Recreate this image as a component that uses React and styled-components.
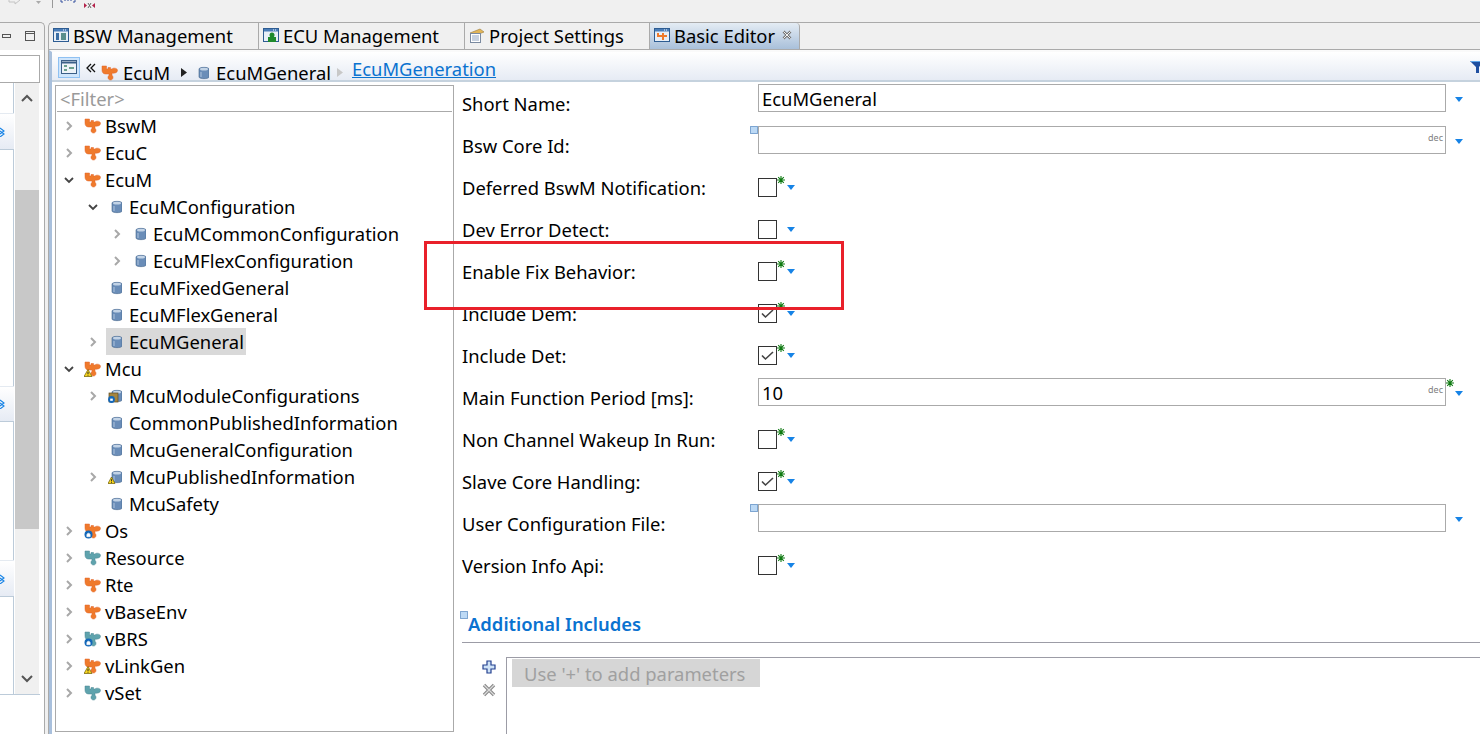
import styled, { createGlobalStyle } from "styled-components";

const Global = createGlobalStyle`
  html, body { margin: 0; padding: 0; background: #f0f0f0; }
  body { font-family: "Noto Sans", "Open Sans", sans-serif; color: #000; }
  #root { width: 1480px; height: 734px; overflow: hidden; }
`;

const Stage = styled.div`
  position: relative;
  width: 1480px;
  height: 734px;
  display: flex;
  flex-direction: column;
  overflow: hidden;
  background: #f0f0f0;
  font-size: 18.4px;
`;

const TopBar = styled.div`
  height: 22px;
  display: flex;
  align-items: flex-start;
  flex: none;
`;

const Main = styled.div`
  flex: 1;
  min-height: 0;
  display: flex;
  gap: 3px;
`;

const SidePanel = styled.div`
  width: 45px;
  flex: none;
  display: flex;
  flex-direction: column;
  border-right: 1px solid #aaa;
  border-top: 1px solid #aaa;
  border-top-right-radius: 5px;
  box-sizing: border-box;
`;

const SideStrip = styled.div`
  height: 26px;
  flex: none;
  display: flex;
  align-items: center;
  gap: 14px;
  padding-left: 2px;
  box-sizing: border-box;
`;

const SideBody = styled.div`
  flex: 1;
  background: #fff;
  padding-top: 5px;
  display: flex;
  flex-direction: column;
  border-top: 1px solid #f0f0f0;
`;

const SideInput = styled.div`
  height: 28px;
  width: 40px;
  flex: none;
  border: 1px solid #aaa;
  border-left: 0;
  box-sizing: border-box;
`;

const SideRow = styled.div`
  height: 611px;
  flex: none;
  display: flex;
  border-bottom: 1px solid #bccbd9;
  width: 40px;
`;

const Sections = styled.div`
  width: 14px;
  flex: none;
  display: flex;
  flex-direction: column;
  border-right: 1px solid #bccbd9;
  box-sizing: border-box;
`;

const SectionHead = styled.div`
  height: ${(p) => p.$h}px;
  flex: none;
  background: linear-gradient(#ffffff, #e6ebf4);
  margin-right: -1px;
  border-top: 1px solid #e4eaf1;
  border-bottom: 1px solid #bccbd9;
  box-sizing: border-box;
  display: flex;
  align-items: center;
  overflow: hidden;
`;

const SectionBody = styled.div`
  height: ${(p) => p.$h}px;
  flex: none;
`;

const Scroll = styled.div`
  width: 24px;
  margin-left: 1px;
  flex: none;
  background: #f0f0f0;
  display: flex;
  flex-direction: column;
  align-items: center;
`;

const ScrollEnd = styled.div`
  height: 30px;
  display: flex;
  align-items: center;
  flex: none;
`;

const Thumb = styled.div`
  width: 24px;
  height: 339px;
  background: #c8c8c8;
  flex: none;
  margin-top: 77px;
  margin-bottom: 135px;
`;

const Editor = styled.div`
  flex: 1;
  min-width: 0;
  display: flex;
  flex-direction: column;
  border-left: 1px solid #aaa;
  border-top: 1px solid #aaa;
  border-top-left-radius: 5px;
  box-sizing: border-box;
`;

const Tabs = styled.div`
  height: 27px;
  flex: none;
  display: flex;
  border-bottom: 1px solid #aaa;
  box-sizing: border-box;
`;

const Tab = styled.div`
  width: ${(p) => p.$w}px;
  flex: none;
  box-sizing: border-box;
  display: flex;
  align-items: center;
  gap: 4px;
  padding: 0 0 2px 4px;
  white-space: nowrap;
  border-right: 1px solid #aaa;
  ${(p) => p.$active && `
    background: linear-gradient(#e4ecf4, #a9c0da);
    border-top-right-radius: 4px;
  `}
`;

const TabClose = styled.span`
  display: flex;
  margin-left: 3px;
`;

const EditorBody = styled.div`
  flex: 1;
  min-height: 0;
  display: flex;
  border-left: 3px solid #a9c0dc;
  border-top: 2px solid #fafafa;
  background: #fff;
`;

const EditorInner = styled.div`
  flex: 1;
  min-width: 0;
  display: flex;
  flex-direction: column;
`;

const FormHead = styled.div`
  height: 30px;
  flex: none;
  box-sizing: border-box;
  background: linear-gradient(#ffffff, #e6ebf4);
  border-bottom: 2px solid #c5d2de;
  display: flex;
  align-items: center;
  padding: 4px 0 0 6px;
  white-space: nowrap;
`;

const ViewBtn = styled.div`
  width: 22px;
  height: 21px;
  box-sizing: border-box;
  border: 1px solid #8fc1f2;
  background: #cfe5fb;
  display: flex;
  align-items: center;
  justify-content: center;
  flex: none;
  margin-right: 6px;
  margin-top: -2px;
`;

const Crumb = styled.span`
  display: inline-flex;
  align-items: center;
  line-height: 22px;
  padding-top: 9px;
  margin-left: ${(p) => p.$ml || 0}px;
`;

const CrumbText = styled.span`
  margin-left: ${(p) => p.$ml}px;
`;

const CrumbLink = styled.a`
  color: #0a72d0;
  text-decoration: underline;
  line-height: 22px;
  margin-left: 9px;
  margin-top: 2px;
`;

const FilterIcon = styled.span`
  margin-left: auto;
  display: flex;
  margin-right: -4px;
  margin-top: -2px;
`;

const Content = styled.div`
  flex: 1;
  min-height: 0;
  display: flex;
  padding-left: 3px;
`;

const TreeBox = styled.div`
  width: 399px;
  height: 647px;
  margin-top: 3px;
  flex: none;
  border: 1px solid #aaa;
  box-sizing: border-box;
  display: flex;
  flex-direction: column;
`;

const FilterBox = styled.div`
  height: 26px;
  flex: none;
  box-sizing: border-box;
  border-bottom: 1px solid #aaa;
  margin: 0 1px;
  padding-left: 3px;
  color: #9a9a9a;
  line-height: 26px;
`;

const TreeList = styled.div`
  display: flex;
  flex-direction: column;
`;

const TreeRow = styled.div`
  height: 27px;
  display: flex;
  align-items: center;
  padding-left: ${(p) => 6 + p.$depth * 24}px;
  white-space: nowrap;
`;

const Caret = styled.span`
  width: 14px;
  flex: none;
  display: flex;
  justify-content: center;
  margin-right: 5px;
`;

const TreeLabel = styled.span`
  display: inline-flex;
  align-items: center;
  height: 27px;
  gap: ${(p) => (p.$top ? 4 : 7)}px;
  padding: 0 2px;
  margin-left: 1px;
  background: ${(p) => (p.$sel ? "#d9d9d9" : "transparent")};
`;

const IconSlot = styled.span`
  width: ${(p) => (p.$top ? 17 : 14)}px;
  height: 18px;
  flex: none;
  display: flex;
  align-items: center;
  justify-content: center;
`;

const Form = styled.div`
  flex: 1;
  min-width: 0;
  padding: 1px 0 0 8px;
  display: flex;
  flex-direction: column;
`;

const FormRow = styled.div`
  height: 42px;
  flex: none;
  display: flex;
  align-items: flex-start;
`;

const FieldLabel = styled.label`
  width: 296px;
  flex: none;
  line-height: 42px;
  white-space: nowrap;
`;

const TextBox = styled.div`
  position: relative;
  width: 688px;
  height: 28px;
  flex: none;
  margin-top: 1px;
  box-sizing: border-box;
  border: 1px solid #aaa;
  padding-left: 3px;
  line-height: 27px;
  display: flex;
  justify-content: space-between;
`;

const DecTag = styled.span`
  font-size: 9px;
  line-height: 11px;
  color: #808080;
  padding: 5px 2px 0 0;
`;

const Marker = styled.span`
  position: absolute;
  left: ${(p) => p.$x}px;
  top: ${(p) => p.$y}px;
  display: flex;
`;

const Check = styled.div`
  width: 19px;
  height: 19px;
  margin-top: 11px;
  flex: none;
  box-sizing: border-box;
  border: 1px solid #333;
  background: #fff;
  display: flex;
  align-items: center;
  justify-content: center;
`;

const Star = styled.span`
  width: 8px;
  height: 8px;
  flex: none;
  display: flex;
  margin-top: ${(p) => (p.$box ? 2 : 9)}px;
  visibility: ${(p) => (p.$on ? "visible" : "hidden")};
`;

const Drop = styled.span`
  display: flex;
  flex: none;
  margin-top: ${(p) => (p.$box ? 14 : 18)}px;
  margin-left: ${(p) => (p.$box ? 1 : 2)}px;
`;

const SectionTitle = styled.div`
  position: relative;
  margin-top: 21px;
  height: 35px;
  flex: none;
  box-sizing: border-box;
  padding-left: 6px;
  color: #0a72d0;
  font-weight: 600;
  line-height: 32px;
  border-bottom: 1px solid #9c9ca6;
  margin-right: -20px;
`;

const ParamArea = styled.div`
  display: flex;
  padding-top: 14px;
`;

const ParamTools = styled.div`
  width: 44px;
  flex: none;
  display: flex;
  flex-direction: column;
  align-items: flex-end;
  gap: 9px;
  padding: 3px 10px 0 0;
  box-sizing: border-box;
`;

const ParamBox = styled.div`
  width: 980px;
  height: 90px;
  flex: none;
  box-sizing: border-box;
  border: 1px solid #9c9ca6;
  border-right: 0;
  border-bottom: 0;
  padding: 1px 0 0 5px;
`;

const Hint = styled.span`
  display: block;
  width: 248px;
  height: 28px;
  background: #d6d6d6;
  color: #a0a0a0;
  line-height: 30px;
  padding-left: 12px;
  box-sizing: border-box;
  white-space: nowrap;
`;

const RedBox = styled.div`
  position: absolute;
  left: 424px;
  top: 241px;
  width: 420px;
  height: 69px;
  box-sizing: border-box;
  border: 3px solid #e9202a;
  pointer-events: none;
`;

const Puzzle = ({ color = "#ef7a2c", dark = "#e0642a", badge }) => (
  <svg width="17" height="16" viewBox="0 0 17 16">
    <path
      d="M1 1h4.500v3H7V2.500h2.500V4H11c.8-1.300 5.500-1.300 5.500 1.500S12 8.500 11 8v2.500c1.500.5 1.500 4.500-1.500 4.500S6.500 11 8 10.500V9H4.500C2 9 1 7 1 5z"
      fill={color}
      stroke={dark}
      strokeWidth=".5"
    />
    {badge === "warn" && <path d="M4 8.500 8 15.500H0z" fill="#f7d51d" stroke="#6b5a00" strokeWidth=".7" />}
    {badge === "warn" && <path d="M4 10.800v2.300M4 13.800v.8" stroke="#222" strokeWidth="1" />}
    {badge === "info" && <circle cx="4.500" cy="11.500" r="4" fill="#1367b8" />}
    {badge === "info" && <path d="M3.200 11.500a1.300 1.300 0 0 1 2.600 0M2.800 11.500h3.400v2.200H2.800z" fill="#fff" stroke="#fff" strokeWidth=".5" />}
  </svg>
);

const Cylinder = ({ badge }) => (
  <svg width="14" height="16" viewBox="0 0 14 16">
    <path d="M4 4C4 1.800 14 1.800 14 4v8c0 2.200-10 2.200-10 0z" fill="#6a8db8" stroke="#45648c" strokeWidth=".6" />
    <ellipse cx="9" cy="4.200" rx="4" ry="1.400" fill="#c2d3e6" />
    <path d="M6 7v5" stroke="#a5bdd8" strokeWidth="1.200" />
    {badge === "stack" && <rect x="1" y="5" width="9" height="9" fill="#a5853f" stroke="#5f4a20" strokeWidth=".7" />}
    {badge === "stack" && <circle cx="3.500" cy="11.500" r="3.400" fill="#1367b8" />}
    {badge === "stack" && <rect x="2.200" y="10.600" width="2.600" height="2.200" fill="#fff" />}
    {badge === "warn" && <path d="M3.500 8 7 14.500H0z" fill="#f7d51d" stroke="#6b5a00" strokeWidth=".7" />}
    {badge === "warn" && <path d="M3.500 10.200v2.200M3.500 13v.8" stroke="#222" strokeWidth=".9" />}
  </svg>
);

const CaretIcon = ({ open }) =>
  open ? (
    <svg width="12" height="12" viewBox="0 0 12 12">
      <path d="M2 4l4 4 4-4" fill="none" stroke="#444" strokeWidth="1.800" />
    </svg>
  ) : (
    <svg width="12" height="12" viewBox="0 0 12 12">
      <path d="M4 2l4 4-4 4" fill="none" stroke="#a8a8a8" strokeWidth="2" />
    </svg>
  );

const WindowIcon = ({ children }) => (
  <svg width="16" height="16" viewBox="0 0 16 16">
    <rect x=".5" y="1.500" width="15" height="13" fill="#e8eff7" stroke="#2d5c92" />
    <rect x="1" y="2" width="14" height="2.500" fill="#4a7db8" />
    <path d="M10 3h1M12 3h1" stroke="#fff" />
    {children}
  </svg>
);

const DropIcon = () => (
  <svg width="8" height="5" viewBox="0 0 8 5">
    <path d="M0 0h8L4 5z" fill="#1683e6" />
  </svg>
);

const StarIcon = () => (
  <svg width="8" height="8" viewBox="0 0 8 8">
    <path d="M4 0v8M0 4h8M1.200 1.200l5.600 5.600M6.800 1.200 1.200 6.800" stroke="#0f7a12" strokeWidth="1.100" />
  </svg>
);

const DotMark = () => (
  <svg width="8" height="8" viewBox="0 0 8 8">
    <rect x=".5" y=".5" width="7" height="7" fill="#bcd9f5" stroke="#1d5ea8" strokeDasharray="1 1" />
  </svg>
);

const CheckMark = () => (
  <svg width="17" height="17" viewBox="0 0 17 17">
    <path d="M3 8.500l3.500 3.500L14 5" fill="none" stroke="#444" strokeWidth="1.600" />
  </svg>
);

const Triangle = ({ color }) => (
  <svg width="6" height="9" viewBox="0 0 6 9">
    <path d="M0 0l6 4.500L0 9z" fill={color} />
  </svg>
);

const Chevrons = () => (
  <svg width="10" height="10" viewBox="0 0 10 10">
    <path d="M5 1 1 5l4 4M9 1 5 5l4 4" fill="none" stroke="#111" strokeWidth="1.300" />
  </svg>
);

const SectionChevron = () => (
  <svg width="13" height="10" viewBox="0 0 13 10">
    <path d="M0 1l4 3-4 3M0 4l4 3-4 3" fill="none" stroke="#1683e6" strokeWidth="1.100" />
  </svg>
);

const ScrollArrow = ({ up }) => (
  <svg width="12" height="8" viewBox="0 0 12 8">
    <path d={up ? "M1 7l5-5 5 5" : "M1 1l5 5 5-5"} fill="none" stroke="#555" strokeWidth="2" />
  </svg>
);

const tree = [
  { d: 0, t: "BswM", top: 1 },
  { d: 0, t: "EcuC", top: 1 },
  { d: 0, t: "EcuM", top: 1, open: 1 },
  { d: 1, t: "EcuMConfiguration", open: 1 },
  { d: 2, t: "EcuMCommonConfiguration", caret: 1 },
  { d: 2, t: "EcuMFlexConfiguration", caret: 1 },
  { d: 1, t: "EcuMFixedGeneral", none: 1 },
  { d: 1, t: "EcuMFlexGeneral", none: 1 },
  { d: 1, t: "EcuMGeneral", caret: 1, sel: 1 },
  { d: 0, t: "Mcu", top: 1, open: 1, badge: "warn" },
  { d: 1, t: "McuModuleConfigurations", caret: 1, badge: "stack" },
  { d: 1, t: "CommonPublishedInformation", none: 1 },
  { d: 1, t: "McuGeneralConfiguration", none: 1 },
  { d: 1, t: "McuPublishedInformation", caret: 1, badge: "warn" },
  { d: 1, t: "McuSafety", none: 1 },
  { d: 0, t: "Os", top: 1, badge: "info" },
  { d: 0, t: "Resource", top: 1, teal: 1 },
  { d: 0, t: "Rte", top: 1 },
  { d: 0, t: "vBaseEnv", top: 1 },
  { d: 0, t: "vBRS", top: 1, teal: 1, badge: "info" },
  { d: 0, t: "vLinkGen", top: 1, badge: "warn" },
  { d: 0, t: "vSet", top: 1, teal: 1 },
];

const fields = [
  { l: "Short Name:", box: 1, v: "EcuMGeneral" },
  { l: "Bsw Core Id:", box: 1, dec: 1, dot: 1 },
  { l: "Deferred BswM Notification:", star: 1 },
  { l: "Dev Error Detect:" },
  { l: "Enable Fix Behavior:", star: 1 },
  { l: "Include Dem:", star: 1, on: 1 },
  { l: "Include Det:", star: 1, on: 1 },
  { l: "Main Function Period [ms]:", box: 1, dec: 1, v: "10", star: 1 },
  { l: "Non Channel Wakeup In Run:", star: 1 },
  { l: "Slave Core Handling:", star: 1, on: 1 },
  { l: "User Configuration File:", box: 1, dot: 1 },
  { l: "Version Info Api:", star: 1 },
];

const App = () => (
  <Stage>
    <Global />
    <TopBar>
      <svg width="100" height="10" viewBox="0 0 100 10">
        <path d="M9 0v2h6v2l5-4" fill="none" stroke="#c4c4c4" />
        <path d="M36 1h5l-2.500 3z" fill="#aaa" />
        <path d="M52.500 0v8" stroke="#999" />
        <path d="M61 0v2h2M75 0v2h-2M65 0v1M68 0v1M71 0v1" stroke="#334f9e" fill="none" />
        <path d="M84 3l3 2.500-3 2.500zM95 3l-3 2.500 3 2.500z" fill="#b3224a" />
        <path d="M88 3l3 5M91 3l-3 5" stroke="#666" />
      </svg>
    </TopBar>
    <Main>
      <SidePanel>
        <SideStrip>
          <svg width="9" height="5" viewBox="0 0 9 5"><rect x=".5" y=".5" width="8" height="3" fill="#f0f0f0" stroke="#555" /></svg>
          <svg width="10" height="10" viewBox="0 0 10 10"><rect x=".5" y=".5" width="9" height="9" fill="none" stroke="#555" /><path d="M1 2.500h8" stroke="#555" /></svg>
        </SideStrip>
        <SideBody>
          <SideInput />
          <SideRow>
            <Sections>
              <SectionBody $h={30} />
              <SectionHead $h={37}><SectionChevron /></SectionHead>
              <SectionBody $h={236} />
              <SectionHead $h={36}><SectionChevron /></SectionHead>
              <SectionBody $h={138} />
              <SectionHead $h={37}><SectionChevron /></SectionHead>
              <SectionBody $h={97} />
            </Sections>
            <Scroll>
              <ScrollEnd><ScrollArrow up /></ScrollEnd>
              <Thumb />
              <ScrollEnd><ScrollArrow /></ScrollEnd>
            </Scroll>
          </SideRow>
        </SideBody>
      </SidePanel>
      <Editor>
        <Tabs>
          <Tab $w={210}>
            <WindowIcon><rect x="3" y="6" width="3" height="7" fill="#3b6ea5" /><rect x="8" y="6" width="5" height="7" fill="#5b8f8c" /></WindowIcon>
            BSW Management
          </Tab>
          <Tab $w={206}>
            <WindowIcon><circle cx="9" cy="8" r="2.500" fill="#1e8a2c" /><rect x="5" y="10" width="8" height="5" fill="#1e8a2c" /></WindowIcon>
            ECU Management
          </Tab>
          <Tab $w={185}>
            <svg width="16" height="16" viewBox="0 0 16 16">
              <path d="M1 6l10-4 4 3-10 4z" fill="#e2b659" stroke="#9a7b3a" strokeWidth=".6" />
              <rect x="1.500" y="6.500" width="10" height="9" fill="#fff" stroke="#7a8aa0" />
              <path d="M3 9h7M3 11h7M3 13h7" stroke="#90a4c0" />
            </svg>
            Project Settings
          </Tab>
          <Tab $w={150} $active>
            <WindowIcon>
              <path d="M3 6h2v2h3V6h2v2h3v2h-3v3H8v-3H3z" fill="#ef7a2c" />
            </WindowIcon>
            Basic Editor
            <TabClose>
              <svg width="10" height="10" viewBox="0 0 10 10">
                <path d="M1.500 1.500l7 7M8.500 1.500l-7 7" stroke="#777" strokeWidth="2.600" />
                <path d="M1.500 1.500l7 7M8.500 1.500l-7 7" stroke="#f2f2f2" strokeWidth="1" />
              </svg>
            </TabClose>
          </Tab>
        </Tabs>
        <EditorBody>
          <EditorInner>
            <FormHead>
              <ViewBtn>
                <svg width="16" height="14" viewBox="0 0 16 14">
                  <rect x=".5" y=".5" width="15" height="13" fill="#eef3f8" stroke="#3b5f88" />
                  <path d="M1 2.500h14" stroke="#3b5f88" strokeWidth="2" />
                  <path d="M3 5h3v2H3zM3 9h3v2H3zM8 7h5v2H8z" fill="#6ba08e" />
                </svg>
              </ViewBtn>
              <Chevrons />
              <Crumb $ml={5}><Puzzle /><CrumbText $ml={5}>EcuM</CrumbText></Crumb>
              <Crumb $ml={11}><Triangle color="#222" /></Crumb>
              <Crumb $ml={8}><Cylinder /><CrumbText $ml={7}>EcuMGeneral</CrumbText></Crumb>
              <Crumb $ml={6}><Triangle color="#c8c8c8" /></Crumb>
              <CrumbLink>EcuMGeneration</CrumbLink>
              <FilterIcon>
                <svg width="14" height="12" viewBox="0 0 14 12">
                  <path d="M0 0h14L9 6v6H6V6z" fill="#1f4fa0" />
                  <path d="M1 .5h12" stroke="#5fa8ea" />
                </svg>
              </FilterIcon>
            </FormHead>
            <Content>
              <TreeBox>
                <FilterBox>&lt;Filter&gt;</FilterBox>
                <TreeList>
                  {tree.map((n) => (
                    <TreeRow key={n.t} $depth={n.d}>
                      <Caret>{!n.none && <CaretIcon open={n.open} />}</Caret>
                      <TreeLabel $top={n.top} $sel={n.sel}>
                        <IconSlot $top={n.top}>
                          {n.top ? (
                            <Puzzle
                              color={n.teal ? "#5fa3ad" : "#ef7a2c"}
                              dark={n.teal ? "#4b8793" : "#e0642a"}
                              badge={n.badge}
                            />
                          ) : (
                            <Cylinder badge={n.badge} />
                          )}
                        </IconSlot>
                        {n.t}
                      </TreeLabel>
                    </TreeRow>
                  ))}
                </TreeList>
              </TreeBox>
              <Form>
                {fields.map((f) => (
                  <FormRow key={f.l}>
                    <FieldLabel>{f.l}</FieldLabel>
                    {f.box ? (
                      <TextBox>
                        {f.dot && <Marker $x={-9} $y={-1}><DotMark /></Marker>}
                        <span>{f.v}</span>
                        {f.dec && <DecTag>dec</DecTag>}
                      </TextBox>
                    ) : (
                      <Check>{f.on && <CheckMark />}</Check>
                    )}
                    <Star $box={f.box} $on={f.star}><StarIcon /></Star>
                    <Drop $box={f.box}><DropIcon /></Drop>
                  </FormRow>
                ))}
                <SectionTitle>
                  <Marker $x={-2} $y={3}><DotMark /></Marker>
                  Additional Includes
                </SectionTitle>
                <ParamArea>
                  <ParamTools>
                    <svg width="14" height="14" viewBox="0 0 14 14">
                      <path d="M5 1h4v4h4v4H9v4H5V9H1V5h4z" fill="#cfe3f7" stroke="#23408f" strokeWidth="1.200" />
                    </svg>
                    <svg width="14" height="14" viewBox="0 0 14 14">
                      <path d="M2 2l10 10M12 2 2 12" stroke="#8a8a8a" strokeWidth="3.400" />
                      <path d="M2 2l10 10M12 2 2 12" stroke="#dcdcdc" strokeWidth="1.200" />
                    </svg>
                  </ParamTools>
                  <ParamBox>
                    <Hint>Use '+' to add parameters</Hint>
                  </ParamBox>
                </ParamArea>
              </Form>
            </Content>
          </EditorInner>
        </EditorBody>
      </Editor>
    </Main>
    <RedBox />
  </Stage>
);

export default App;
